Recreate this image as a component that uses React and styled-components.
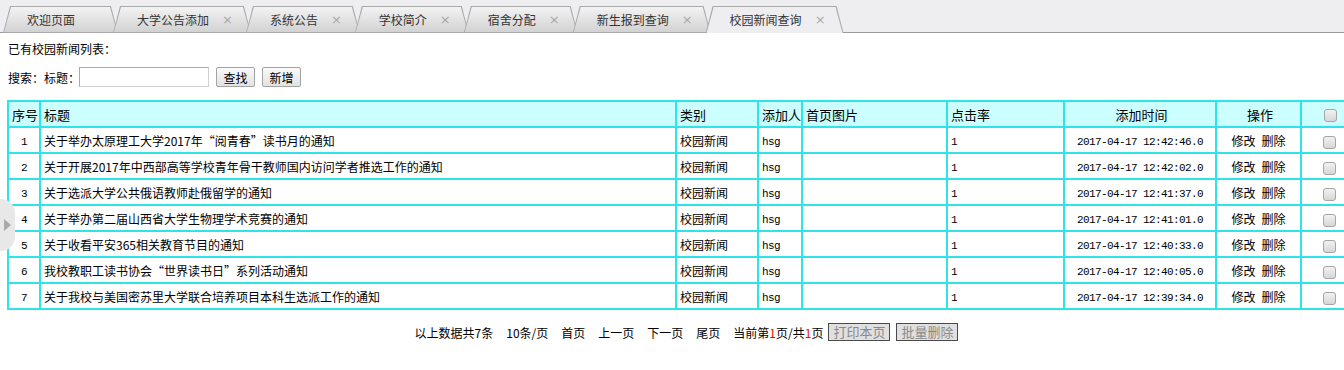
import React from "react";
import styled, { createGlobalStyle } from "styled-components";

const GlobalStyle = createGlobalStyle`
  html, body {
    margin: 0;
    padding: 0;
    background: #fff;
    overflow: hidden;
  }
  body {
    font-family: "Noto Sans CJK SC", "DejaVu Sans", sans-serif;
    font-size: 12px;
    color: #000;
  }
`;

const Page = styled.div`
  position: relative;
  width: 1344px;
  height: 370px;
`;

const TabBar = styled.div`
  height: 33px;
  box-sizing: border-box;
  background: #eeeef0;
  border-bottom: 1px solid #9b9b9b;
  display: flex;
  align-items: flex-end;
  padding-left: 3px;
`;

const Tab = styled.div`
  position: relative;
  height: 26px;
  box-sizing: border-box;
  display: flex;
  align-items: center;
  gap: 13px;
  padding: 0 18px 0 24px;
  margin-right: -5px;
  width: ${p => (p.$w ? `${p.$w}px` : "auto")};
  color: #333;
  font-size: 12px;
  z-index: ${p => (p.$active ? 2 : 1)};
  &::before,
  &::after {
    content: "";
    position: absolute;
    z-index: -1;
  }
  &::before {
    inset: 0 0 -1px 0;
    background: #a9a9a9;
    clip-path: polygon(0 100%, 7px 0, calc(100% - 7px) 0, 100% 100%);
  }
  &::after {
    top: 1px;
    left: 1px;
    right: 1px;
    bottom: ${p => (p.$active ? "-1px" : "0")};
    background: ${p =>
      p.$active ? "#eeeef0" : "linear-gradient(#f3f3f3, #d2d2d2)"};
    clip-path: polygon(0 100%, 7px 0, calc(100% - 7px) 0, 100% 100%);
  }
`;

const Close = styled.span`
  color: #a8a8a8;
  font-size: 13px;
  font-family: "DejaVu Sans", sans-serif;
`;

const Content = styled.div`
  width: 1350px;
  padding: 8px 0 0 7px;
  box-sizing: border-box;
`;

const Caption = styled.div`
  padding-left: 1px;
  line-height: 16px;
  height: 16px;
`;

const SearchRow = styled.div`
  display: flex;
  align-items: center;
  height: 22px;
  margin-top: 9px;
  padding-left: 1px;
`;

const SearchInput = styled.input`
  width: 130px;
  height: 20px;
  box-sizing: border-box;
  margin: 0 0 0 -1px;
  border: 1px solid #a9a9a9;
  border-right-color: #d0d0d0;
  border-bottom-color: #d0d0d0;
  padding: 0 3px;
  font-size: 12px;
  outline: none;
`;

const Button = styled.button`
  height: 20px;
  width: 39px;
  box-sizing: border-box;
  margin-left: 7px;
  padding: 0;
  border: 1px solid #a3a3a3;
  border-radius: 2px;
  background: linear-gradient(#fafafa, #e2e2e2);
  font-family: inherit;
  font-size: 12px;
  color: #000;
`;

const Table = styled.table`
  margin-top: 12px;
  width: 1349px;
  border-collapse: collapse;
  table-layout: fixed;
  font-size: 12px;
`;

const Th = styled.th`
  height: 24px;
  padding: 0 0 0 3px;
  border: 2px solid #2ee4ea;
  background: #ccffff;
  font-weight: normal;
  font-size: 13px;
  text-align: ${p => p.$align || "left"};
  white-space: nowrap;
  overflow: hidden;
`;

const Td = styled.td`
  height: ${p => (p.$mono ? "21px" : "24px")};
  padding: ${p => (p.$mono ? "3px" : "0")} 0 0
    ${p => (p.$align === "center" ? "0" : "3px")};
  border: 2px solid #2ee4ea;
  text-align: ${p => p.$align || "left"};
  white-space: nowrap;
  overflow: hidden;
  font-family: ${p =>
    p.$mono
      ? '"Liberation Mono", "DejaVu Sans Mono", monospace'
      : "inherit"};
  font-size: ${p => (p.$mono ? "11px" : "12px")};
  letter-spacing: ${p => (p.$mono ? "-0.6px" : "0")};
`;

const Actions = styled.span`
  display: inline-flex;
  gap: 6px;
`;

const Check = styled.span`
  display: inline-block;
  width: 11px;
  height: 11px;
  vertical-align: middle;
  border: 1px solid #a6a6a6;
  border-radius: 3px;
  background: linear-gradient(#f2f2f2, #d6d6d6);
`;

const Pager = styled.div`
  margin-top: 13px;
  width: 1349px;
  display: flex;
  justify-content: center;
  align-items: center;
  gap: 13px;
  height: 18px;
  padding-left: 10px;
  box-sizing: border-box;
`;

const PagerText = styled.span`
  white-space: nowrap;
`;

const Red = styled.span`
  color: #ff0000;
`;

const PagerButtons = styled.span`
  display: inline-flex;
  gap: 6px;
  margin-left: -8px;
`;

const PagerButton = styled.button`
  height: 18px;
  box-sizing: border-box;
  padding: 0 4px;
  border: 1px solid #4a4a4a;
  background: #e0e0e0;
  color: #8a8a8a;
  font-family: inherit;
  font-size: 13px;
  line-height: 14px;
`;

const SideHandle = styled.div`
  position: absolute;
  left: 0;
  top: 199px;
  width: 15px;
  height: 52px;
  background: #e8e8e8;
  border-radius: 0 14px 14px 0;
  &::after {
    content: "";
    position: absolute;
    left: 4px;
    top: 20px;
    border-left: 7px solid #a9a9a9;
    border-top: 6px solid transparent;
    border-bottom: 6px solid transparent;
  }
`;

const tabs = [
  { name: "欢迎页面", w: 115, closable: false },
  { name: "大学公告添加", closable: true },
  { name: "系统公告", closable: true },
  { name: "学校简介", closable: true },
  { name: "宿舍分配", closable: true },
  { name: "新生报到查询", closable: true },
  { name: "校园新闻查询", closable: true, active: true },
];

const news = [
  ["关于举办太原理工大学2017年“阅青春”读书月的通知", "2017-04-17 12:42:46.0"],
  ["关于开展2017年中西部高等学校青年骨干教师国内访问学者推选工作的通知", "2017-04-17 12:42:02.0"],
  ["关于选派大学公共俄语教师赴俄留学的通知", "2017-04-17 12:41:37.0"],
  ["关于举办第二届山西省大学生物理学术竞赛的通知", "2017-04-17 12:41:01.0"],
  ["关于收看平安365相关教育节目的通知", "2017-04-17 12:40:33.0"],
  ["我校教职工读书协会“世界读书日”系列活动通知", "2017-04-17 12:40:05.0"],
  ["关于我校与美国密苏里大学联合培养项目本科生选派工作的通知", "2017-04-17 12:39:34.0"],
];

const cols = [32, 636, 82, 44, 145, 117, 152, 85, 56];

const App = () => {
  return (
    <Page>
      <GlobalStyle />
      <TabBar>
        {tabs.map(t => (
          <Tab key={t.name} $w={t.w} $active={t.active}>
            <span>{t.name}</span>
            {t.closable && <Close>×</Close>}
          </Tab>
        ))}
      </TabBar>
      <Content>
        <Caption>已有校园新闻列表：</Caption>
        <SearchRow>
          搜索：标题：
          <SearchInput type="text" />
          <Button>查找</Button>
          <Button>新增</Button>
        </SearchRow>
        <Table>
          <colgroup>
            {cols.map((w, i) => (
              <col key={i} style={{ width: w }} />
            ))}
          </colgroup>
          <thead>
            <tr>
              <Th>序号</Th>
              <Th>标题</Th>
              <Th>类别</Th>
              <Th>添加人</Th>
              <Th>首页图片</Th>
              <Th>点击率</Th>
              <Th $align="center">添加时间</Th>
              <Th $align="center">操作</Th>
              <Th $align="center">
                <Check />
              </Th>
            </tr>
          </thead>
          <tbody>
            {news.map(([title, time], i) => (
              <tr key={i}>
                <Td $align="center" $mono>
                  {i + 1}
                </Td>
                <Td>{title}</Td>
                <Td>校园新闻</Td>
                <Td $mono>hsg</Td>
                <Td />
                <Td $mono>1</Td>
                <Td $align="center" $mono>
                  {time}
                </Td>
                <Td $align="center">
                  <Actions>
                    <span>修改</span>
                    <span>删除</span>
                  </Actions>
                </Td>
                <Td $align="center">
                  <Check />
                </Td>
              </tr>
            ))}
          </tbody>
        </Table>
        <Pager>
          <PagerText>以上数据共7条</PagerText>
          <PagerText>10条/页</PagerText>
          <PagerText>首页</PagerText>
          <PagerText>上一页</PagerText>
          <PagerText>下一页</PagerText>
          <PagerText>尾页</PagerText>
          <PagerText>
            当前第<Red>1</Red>页/共<Red>1</Red>页
          </PagerText>
          <PagerButtons>
            <PagerButton>打印本页</PagerButton>
            <PagerButton>批量删除</PagerButton>
          </PagerButtons>
        </Pager>
      </Content>
      <SideHandle />
    </Page>
  );
};

export default App;
